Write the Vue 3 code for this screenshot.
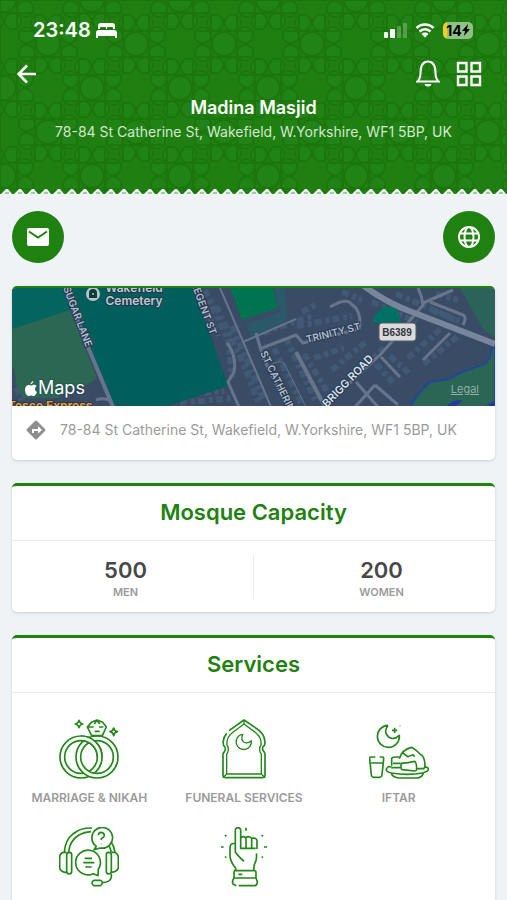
<template>
  <div class="screen">
    <header class="hero">
      <svg class="hero-pattern" aria-hidden="true">
        <defs>
          <pattern id="girih" x="4" width="88" height="88" patternUnits="userSpaceOnUse">
            <g v-for="(c, i) in rosettes" :key="i" :transform="`translate(${c[0]} ${c[1]})`">
              <circle r="12" class="tile-fill" />
              <circle
                v-for="a in angles"
                :key="a"
                r="8"
                cx="23"
                class="tile-fill"
                :transform="`rotate(${a + 22})`"
              />
              <path d="M-30 -13H30M-30 13H30M-13 -30V30M13 -30V30" />
            </g>
          </pattern>
          <pattern id="teeth" width="13" height="7" patternUnits="userSpaceOnUse">
            <path d="M0 7V6L1 6 6 1H8L12 6H13V7Z" fill="#eff3f6" stroke="none" />
            <path d="M5 5H9" stroke="#5aa04c" stroke-width="1" />
          </pattern>
        </defs>
        <rect width="100%" height="100%" fill="url(#girih)" />
      </svg>

      <div class="status">
        <span class="time">23:48</span>
        <svg class="bed" viewBox="0 0 21 15" width="21" height="15">
          <path d="M2 6V3a3 3 0 0 1 3-3h11a3 3 0 0 1 3 3v3h-2V5a1 1 0 0 0-1-1h-4a1 1 0 0 0-1 1v1h-1V5a1 1 0 0 0-1-1H5a1 1 0 0 0-1 1v1ZM0 15v-5a3 3 0 0 1 3-3h15a3 3 0 0 1 3 3v5h-2v-2H2v2Z" fill="#fff" />
        </svg>
        <svg class="signal" viewBox="0 0 24 15" width="24" height="15" fill="#fff">
          <rect y="9" width="4" height="6" rx="1" />
          <rect x="6" y="6" width="5" height="9" rx="1" />
          <rect x="13" y="3" width="4" height="12" rx="1" opacity=".25" />
          <rect x="19" width="4" height="15" rx="1" opacity=".25" />
        </svg>
        <svg viewBox="0 0 20 15" width="20" height="15">
          <path d="M1.500 5a12 12 0 0 1 17 0M4.500 8.500a8 8 0 0 1 11 0" fill="none" stroke="#fff" stroke-width="2.600" />
          <path d="M6.500 11a5 5 0 0 1 7 0L10 14.500Z" fill="#fff" />
        </svg>
        <span class="battery">14<svg viewBox="0 0 8 12" width="8" height="12"><path d="M6 0 0 7h3L2 12 8 5H5Z" /></svg></span>
      </div>

      <nav class="bar">
        <button type="button" class="icon-btn back" aria-label="Back">
          <svg viewBox="0 0 20 20" width="20" height="20">
            <path d="M19 10H2M10 1.500 1.500 10l8.500 8.500" stroke-width="2.600" />
          </svg>
        </button>
        <button type="button" class="icon-btn" aria-label="Notifications">
          <svg viewBox="0 0 24 28" width="24" height="28">
            <path d="M1.500 21.500h21c-2-2-3-4-3-8.500 0-7-2-11.500-7.500-11.500S4.500 6 4.500 13c0 4.500-1 6.500-3 8.500Z" />
            <path d="M9 24.500h6c-.5 2-5.500 2-6 0Z" fill="#fff" stroke-width="1" />
          </svg>
        </button>
        <button type="button" class="icon-btn" aria-label="Menu">
          <svg viewBox="0 0 26 26" width="26" height="26">
            <path d="M2 2h8.500v8.500H2ZM15.500 2H24v8.500h-8.500ZM2 15.500h8.500V24H2ZM15.500 15.500H24V24h-8.500Z" stroke-width="2.400" />
          </svg>
        </button>
      </nav>

      <h1>Madina Masjid</h1>
      <p class="hero-address">{{ address }}</p>
      <svg class="zigzag" aria-hidden="true">
        <rect width="100%" height="7" fill="url(#teeth)" />
      </svg>
    </header>

    <main>
      <div class="contacts">
        <button type="button" class="round" aria-label="Email">
          <svg viewBox="0 0 22 18" width="22" height="18">
            <rect width="22" height="18" rx="2" fill="#fff" />
            <path d="m2 3.500 9 6 9-6" fill="none" stroke="#1f810f" stroke-width="2" />
          </svg>
        </button>
        <button type="button" class="round" aria-label="Website">
          <svg viewBox="0 0 22 22" width="22" height="22" fill="none" stroke="#fff" stroke-width="2">
            <circle cx="11" cy="11" r="10" />
            <ellipse cx="11" cy="11" rx="4.500" ry="10" />
            <path d="M2 7.500h18M2 14.500h18" />
          </svg>
        </button>
      </div>

      <section class="card map-card">
        <div class="map">
          <svg class="map-art" viewBox="0 0 483 118" preserveAspectRatio="xMidYMid slice">
            <rect width="483" height="118" fill="#3a4b66" />
            <g class="houses">
              <path v-for="d in houses" :key="d" :d="d" />
            </g>
            <path d="M0 0H54L60 22 0 41Z" fill="#04655f" />
            <path d="M0 41 58 22 85 90Q76 99 58 101L46 110H12Q4 104 3 84L0 78Z" fill="#2b6753" />
            <path d="M56 0H180L200 52 216 98 168 114 155 118H103L78 59Z" fill="#005f5c" />
            <path d="M218 0H261L266 20 230 32Z" fill="#007450" />
            <path d="M262 0 268 24 234 36 240 50 276 32 273 0Z" fill="#2b5969" />
            <path d="M448 0H483V50L471 41Z" fill="#2b6259" />
            <path d="M361 31Q367 18 378 18 387 18 389 35H361Z" fill="#007064" />
            <path d="M398 119Q405 106 418 94L437 91 450 84 473 76Q479 70 480 60L483 57V119Z" fill="#2b6553" stroke="#204798" stroke-width="2" />
            <path d="M435 118Q440 111 451 112L444 118ZM474 118l9-6v6Z" fill="#2439a0" />
            <g class="streets">
              <path d="M53 0 76 59 101 119" stroke-width="4" />
              <path d="M84 112Q92 109 99 113" />
              <path d="M208 0 242 79 259 119M231 54 284 31" stroke-width="2" />
              <path d="M215 55Q225 68 222 84L216 94 227 119" />
              <path d="M244 45 251 69 275 119" />
              <path d="M250 60 284 47 291 55 347 41Q350 30 344 20L337 14Q331 11 318 19" />
              <path d="M259 77Q265 72 272 75L294 119" stroke-width="1" />
              <path d="M284 64 313 119" stroke-width="4" />
              <path d="M305 125 368 67 384 49 411 17Q410 8 406 0M411 15 441 2M418 14 451 27Q455 29 451 37" />
              <path d="M369 69 388 89M438 45 411 72M344 94 366 119M363 97 343 119M363 97 386 117" />
              <path d="M352-2Q375 15 400 24L483 56" stroke="#78869d" stroke-width="6" />
            </g>
            <g class="street-names">
              <text transform="translate(51 0) rotate(69)">SUGAR LANE</text>
              <text transform="translate(179 -5) rotate(70)">REGENT ST</text>
              <text transform="translate(248 65) rotate(64)">ST CATHERINE</text>
              <text transform="translate(295 55) rotate(-14)">TRINITY ST</text>
              <text class="major" transform="translate(315 120) rotate(-46)">BRIGG ROAD</text>
            </g>
            <circle cx="81" cy="6" r="7" fill="#b9c5cb" />
            <path d="M77 10V5q0-4 4-4t4 4v5Z" fill="#123b3f" />
            <circle cx="81" cy="6" r="1" fill="#b9c5cb" />
            <g class="place">
              <text x="122" y="4">Wakefield</text>
              <text x="122" y="17">Cemetery</text>
            </g>
            <text class="shop" x="-4" y="122">Tesco Express</text>
            <rect x="367" y="35" width="37" height="18" rx="3" fill="#d9dbdf" stroke="#5d5957" />
            <text class="shield" x="385" y="48">B6389</text>
          </svg>
          <span class="brand">
            <svg viewBox="0 0 12 15" width="12" height="15" fill="#fff">
              <path d="M8.500 0Q8 3 5.500 3.500 5.500 1 8.500 0ZM6 4.500c1 0 2-1 3.500-.7 1 .1 1.700.6 2.200 1.200-2.500 1.700-2 5 .3 6C11 13.500 9.800 15 8.500 15c-1 0-1.300-.6-2.400-.6-1 0-1.500.6-2.400.6C1.700 15 0 11.800 0 9c0-3.300 1.800-5 3.600-5 1 0 1.700.5 2.400.5Z" />
            </svg>Maps
          </span>
          <a class="legal" href="#">Legal</a>
        </div>
        <div class="route">
          <svg viewBox="0 0 20 20" width="20" height="20">
            <path d="M9 1q1-1 2 0l8 8q1 1 0 2l-8 8q-1 1-2 0l-8-8q-1-1 0-2Z" fill="#8e8e8e" />
            <path d="M6 13V9h6V6l4 4-4 3.500V11H8v2Z" fill="#fff" />
          </svg>
          <span>{{ address }}</span>
        </div>
      </section>

      <section class="card">
        <h2>Mosque Capacity</h2>
        <div class="capacity">
          <div v-for="c in capacity" :key="c.label" class="count">
            <strong>{{ c.value }}</strong>
            <span>{{ c.label }}</span>
          </div>
        </div>
      </section>

      <section class="card">
        <h2>Services</h2>
        <ul class="services">
          <li v-for="s in services" :key="s.id">
            <svg viewBox="0 0 180 180" width="60" height="60">
              <template v-if="s.id === 'nikah'">
                <g v-for="(r, i) in rings" :key="i">
                  <path :d="r" stroke-width="19" />
                  <path :d="r" class="hollow" />
                </g>
                <path d="M85 24 97 10 114 3 131 10 142 24 130 50H98ZM85 24H104M120 24H133M107 37H122M114 3 106 15M114 3 122 15" />
                <path d="M60 4Q62 13 71 15 62 17 60 26 58 17 49 15 58 13 60 4ZM164 27Q166 36 175 38 166 40 164 50 162 40 153 38 162 36 164 27Z" />
              </template>
              <template v-else-if="s.id === 'funeral'">
                <path d="M45 35 90 3 124 26Q152 42 153 70 154 79 147 83 143 91 150 98L153 104V169Q153 176 145 176H35Q27 176 27 169V104L31 98Q37 91 32 83 26 79 28 66 29 53 38 43" />
                <path d="M38 165V106Q48 91 39 78 36 56 55 41L90 15 125 41Q144 56 141 78 132 91 142 106V165ZM90 3V15M27 176 38 165M153 176 142 165" stroke-width="4" />
                <path d="M84 46A23 23 0 1 0 112 65Q101 76 89 69 79 61 87 45" stroke-width="4" />
              </template>
              <template v-else-if="s.id === 'iftar'">
                <path d="M57 19A33 33 0 1 0 91 49Q74 65 59 54 42 40 57 19" />
                <path d="M77 26V42M69 34H85M92 21h2" />
                <path d="M19 114H4Q1 114 2 120L7 168Q8 175 15 175H31Q38 175 39 168L44 120Q44 114 41 114H32M6 132H41" />
                <path d="M53 149Q48 158 67 162 116 170 160 162 180 157 178 149 175 142 166 145M53 149Q56 140 67 144M67 164Q73 176 90 177H144Q158 176 163 163M68 140V119Q69 114 80 114H90M91 119Q99 91 128 85 141 92 153 105 168 111 168 143L164 149H143M97 133Q118 131 137 127 143 130 143 152 142 156 137 156L100 152Q94 151 97 133ZM67 146H95M72 133H94M102 102 116 113 132 107 137 113" />
              </template>
              <template v-else-if="s.id === 'support'">
                <path d="M16 76Q18 39 43 20L53 13M29 76Q33 31 77 17L96 14M45 20Q63 2 99 3M155 43Q165 56 168 75M151 58 157 75" />
                <path d="M22 76H13Q2 79 2 92V121Q2 133 18 136H23M23 83Q23 76 31 76 38 76 38 83V133Q38 141 31 141 23 141 23 133ZM142 83Q142 76 149 76 157 76 157 83V133Q157 141 149 141 142 141 142 133ZM158 76H166Q178 80 178 92V121Q177 133 158 136" />
                <path d="M103 140A37 37 0 1 1 118 127L117 146ZM77 94H99M73 107H106M79 120H98" />
                <path d="M112 58A31 31 0 1 1 124 63L105 68ZM118 25Q118 16 127 16 136 17 136 26 136 30 127 35V39M127 50v2M157 141V150Q155 166 130 167M105 160H124Q130 162 130 168 129 175 124 176H105Q99 174 99 168 99 162 105 160Z" fill="#fff" />
              </template>
              <template v-else>
                <path d="M80 66V10Q80 2 72 2 64 2 64 10V75Q71 86 90 103M64 50Q48 47 48 62V89Q50 106 65 123V130M80 34Q82 29 88 29 96 29 96 37V64M80 64H125M96 32Q104 25 113 34V64M113 34Q130 31 129 44V66M127 79Q130 96 121 113L119 130" />
                <path d="M60 131H122Q126 131 126 136V153H60V136Q60 131 64 131M60 153Q53 163 57 171L67 176M74 176H123Q130 174 130 164L126 153M73 142H85M96 2V11M33 24 37 28M143 28 147 24M21 60H29M150 60H159M33 92 37 89M143 89 147 92" />
              </template>
            </svg>
            <span v-if="s.label">{{ s.label }}</span>
          </li>
        </ul>
      </section>
    </main>
  </div>
</template>

<script setup>
const address = '78-84 St Catherine St, Wakefield, W.Yorkshire, WF1 5BP, UK'

const capacity = [
  { value: 500, label: 'MEN' },
  { value: 200, label: 'WOMEN' },
]

const services = [
  { id: 'nikah', label: 'MARRIAGE & NIKAH' },
  { id: 'funeral', label: 'FUNERAL SERVICES' },
  { id: 'iftar', label: 'IFTAR' },
  { id: 'support' },
  { id: 'shahada' },
]

// left ring, right ring, then the part of the left ring that crosses on top
const rings = [
  'M10 114A56 56 0 1 1 122 114A56 56 0 1 1 10 114',
  'M58 114A56 56 0 1 1 170 114A56 56 0 1 1 58 114',
  'M66 58A56 56 0 0 1 122 114',
]

// header ornament: corners and centre of one 88px tile
const rosettes = [[0, 0], [88, 0], [0, 88], [88, 88], [44, 44]]
const angles = [0, 45, 90, 135, 180, 225, 270, 315]

const houses = [
  'M193 2 216 52 220 90',
  'M204 18 231 75 247 116',
  'M220 38 240 84 252 112',
  'M186 4 206 48',
  'M262 60 290 116',
  'M274 50 303 112',
  'M292 66 318 108',
  'M251 45 300 28',
  'M285 38 340 28',
  'M290 24 305 16',
  'M302 70 332 60',
  'M320 82 356 52',
  'M340 88 372 60',
  'M378 68 398 86',
  'M364 76 382 96',
  'M396 70 434 36',
  'M412 76 446 48',
  'M360 14 405 34',
  'M384 6 450 34',
  'M330 4 350 12',
  'M120 112 212 103',
  'M168 115 220 110',
  'M420 22 444 32',
  'M424 6 446 12',
  'M4 100 10 112',
]
</script>

<style>
body {
  background: #eff3f6;
}
</style>

<style scoped>
.screen {
  height: 100vh;
  overflow-y: auto;
  scrollbar-width: none;
  background: #eff3f6;
  font-family: Inter, "Liberation Sans", sans-serif;
}

button {
  display: flex;
  align-items: center;
  justify-content: center;
  padding: 0;
  border: 0;
  background: none;
  cursor: pointer;
}

.hero {
  position: relative;
  display: flex;
  flex-direction: column;
  padding-top: 20px;
  background: #1f7f10;
  color: #fff;
  text-align: center;
}
.hero > * {
  position: relative;
}
.hero > .hero-pattern {
  position: absolute;
  inset: 0;
  width: 100%;
  height: 100%;
  fill: none;
  stroke: #18700a;
  stroke-width: 2px;
  opacity: .5;
}
.tile-fill {
  fill: #23861a;
}

.status {
  display: flex;
  align-items: center;
  height: 20px;
  padding: 0 34px 0 33px;
}
.time {
  font-size: 20px;
  font-weight: 600;
}
.bed {
  margin-left: 5px;
}
.signal {
  margin: 0 7px 0 auto;
}
.battery {
  display: flex;
  align-items: center;
  justify-content: center;
  width: 30px;
  height: 17px;
  margin-left: 8px;
  border-radius: 5px;
  background: linear-gradient(90deg, #f5cf1d 4px, #91c184 4px);
  color: #000;
  font-size: 14px;
  font-weight: 700;
}

.bar {
  display: flex;
  align-items: center;
  gap: 16px;
  height: 28px;
  margin-top: 20px;
  padding: 0 25px 0 17px;
}
.icon-btn svg {
  fill: none;
  stroke: #fff;
  stroke-width: 2px;
}
.back {
  margin-right: auto;
}

h1 {
  margin: 8px 0 0;
  font-size: 18px;
  line-height: 24px;
  font-weight: 600;
}
.hero-address {
  margin: 2px 0 0;
  color: #d3e8cf;
  font-size: 14px;
  line-height: 20px;
}
.zigzag {
  width: 100%;
  height: 7px;
  margin-top: 46px;
}

main {
  display: flex;
  flex-direction: column;
  gap: 23px;
  padding: 16px 12px 24px;
}
.contacts {
  display: flex;
  justify-content: space-between;
}
.round {
  width: 52px;
  height: 52px;
  border-radius: 50%;
  background: #1f810f;
}

.card {
  overflow: hidden;
  border-top: 3px solid #1f810f;
  border-radius: 5px;
  background: #fff;
  box-shadow: 0 1px 3px #00000026;
}
.map-card {
  border-top-width: 2px;
}
.map {
  position: relative;
  height: 118px;
}
.map-art {
  display: block;
  width: 100%;
  height: 100%;
}
.houses {
  fill: none;
  stroke: #425975;
  stroke-width: 6px;
  stroke-dasharray: 7 4 4 3;
}
.streets {
  fill: none;
  stroke: #66758c;
  stroke-width: 3px;
  stroke-linejoin: round;
}
.map text {
  font-weight: 600;
  stroke: #273851;
  stroke-width: 2px;
  paint-order: stroke;
}
.street-names {
  fill: #aebccd;
  font-size: 10px;
}
.street-names .major {
  fill: #d8e2ee;
  font-size: 11px;
}
.place {
  fill: #b9cbcd;
  font-size: 12px;
  text-anchor: middle;
}
.shop {
  fill: #f2a02b;
  font-size: 12px;
}
.map .shield {
  fill: #34363a;
  stroke: none;
  font-family: "Liberation Sans", sans-serif;
  font-size: 10px;
  font-weight: 700;
  text-anchor: middle;
}
.brand {
  position: absolute;
  left: 13px;
  bottom: 8px;
  display: flex;
  align-items: center;
  gap: 1px;
  color: #fff;
  font-size: 18px;
  line-height: 20px;
  text-shadow: 0 0 2px #17303f;
}
.legal {
  position: absolute;
  right: 16px;
  bottom: 10px;
  color: #8faea8;
  font-size: 11px;
  line-height: 14px;
}
.route {
  display: flex;
  align-items: center;
  gap: 14px;
  padding: 14px 14px 20px;
  color: #9b9b9b;
  font-size: 14px;
  line-height: 20px;
}

h2 {
  margin: 0;
  padding: 12px 0 14px;
  border-bottom: 1px solid #ececec;
  color: #1f810f;
  font-size: 22px;
  line-height: 28px;
  font-weight: 600;
  text-align: center;
}
.capacity {
  display: flex;
  padding: 14px 0;
}
.count {
  display: flex;
  flex: 1;
  flex-direction: column;
  align-items: center;
  height: 43px;
  padding-right: 14px;
}
.count + .count {
  padding: 0 0 0 14px;
  border-left: 1px solid #ececec;
}
.count strong {
  color: #484848;
  font-size: 22px;
  line-height: 30px;
  font-weight: 600;
}
.count span,
.services span {
  color: #9b9b9b;
  font-size: 12px;
  line-height: 14px;
  font-weight: 600;
}
.count span {
  font-size: 11px;
}

.services {
  display: grid;
  grid-template-columns: repeat(3, 1fr);
  row-gap: 22px;
  margin: 0;
  padding: 26px 19px 44px 0;
  list-style: none;
}
.services li {
  display: flex;
  flex-direction: column;
  align-items: center;
  gap: 12px;
}
.services svg {
  fill: none;
  stroke: #23871a;
  stroke-width: 5px;
  stroke-linejoin: round;
}
.services .hollow {
  stroke: #fff;
  stroke-width: 9px;
}
</style>
